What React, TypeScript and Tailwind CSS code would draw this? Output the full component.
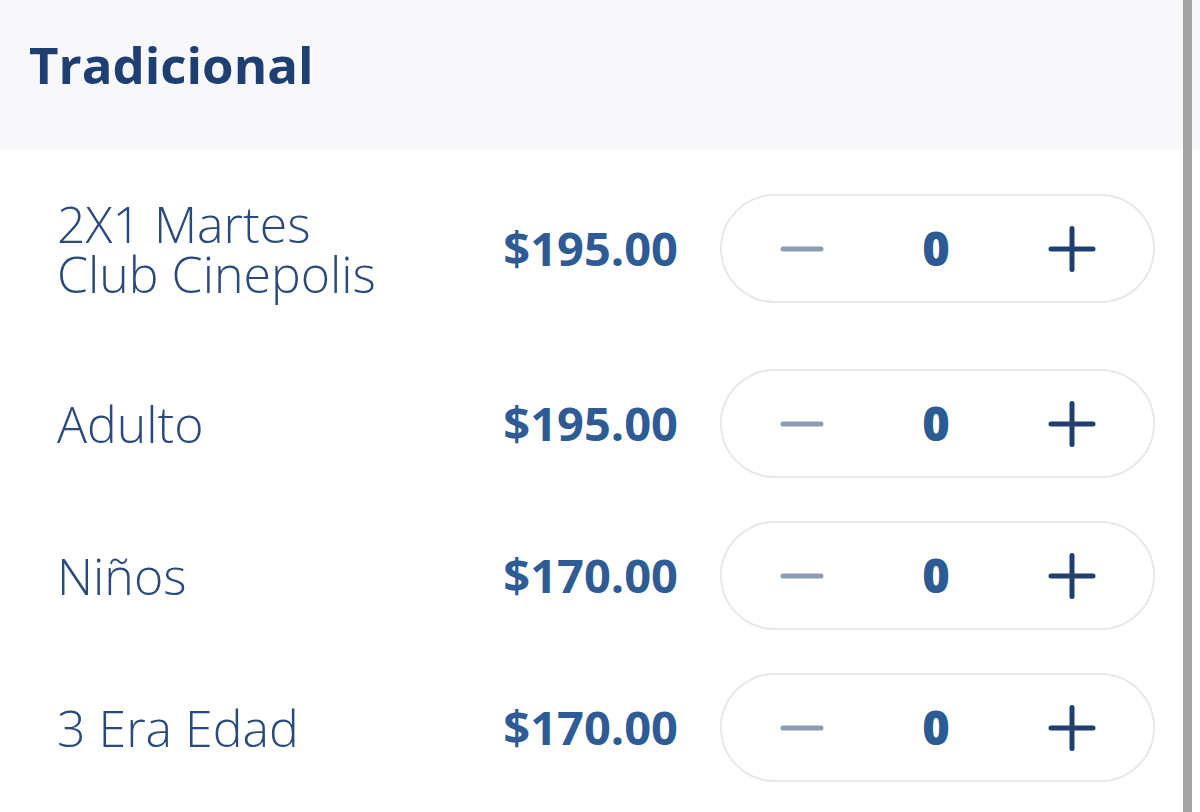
import React from 'react';

// Lista de boletos
const tickets = [
  { name: '2X1 Martes\nClub Cinepolis', price: '$195.00' },
  { name: 'Adulto', price: '$195.00' },
  { name: 'Niños', price: '$170.00' },
  { name: '3 Era Edad', price: '$170.00' },
];

const MinusIcon = () => (
  <svg width="44" height="10" viewBox="0 0 44 10" fill="none">
    <path d="M3 5h38" stroke="#8e9cb6" strokeWidth="5" strokeLinecap="round" />
  </svg>
);

const PlusIcon = () => (
  <svg width="48" height="46" viewBox="0 0 48 46" fill="none">
    <path d="M3 23h42M24 2.5v41" stroke="#1f3f6e" strokeWidth="5" strokeLinecap="round" />
  </svg>
);

const Stepper = ({ value }: { value: number }) => (
  <div className="flex h-[109px] w-[435px] shrink-0 items-center justify-between rounded-full border-2 border-[#e7e8ec] bg-white pl-[58px] pr-[57px]">
    <button className="flex items-center">
      <MinusIcon />
    </button>
    <span className="text-[47px] font-extrabold leading-none text-[#2c5a92]">{value}</span>
    <button className="flex items-center">
      <PlusIcon />
    </button>
  </div>
);

const TicketRow = ({ ticket, first }: { ticket: typeof tickets[0]; first: boolean }) => (
  <div className={`flex items-center pl-[57px] pr-[45px] ${first ? 'mb-[23px]' : ''}`}>
    <div className="w-[350px] whitespace-pre-line text-[50px] font-light leading-[50px] text-[#2b4a7b]">
      {ticket.name}
    </div>
    <div className="flex-1 pr-[42px] text-right text-[47px] font-bold leading-none text-[#2e5b94]">
      {ticket.price}
    </div>
    <Stepper value={0} />
  </div>
);

export default function App() {
  return (
    <div className="relative h-[812px] w-[1200px] overflow-hidden bg-white" style={{ fontFamily: '"Open Sans", sans-serif' }}>
      <div className="h-[150px] bg-[#f8f8fa] pl-[29px] pt-[39px]">
        <h2 className="text-[51px] font-bold leading-none text-[#1f3f73]">Tradicional</h2>
      </div>
      <div className="flex flex-col gap-[43px] pt-[44px]">
        {tickets.map((t, i) => (
          <TicketRow key={t.name} ticket={t} first={i === 0} />
        ))}
      </div>
      {/* barra de scroll */}
      <div className="absolute bottom-0 right-[8px] top-0 w-[9px] bg-[#a3a3a3]" />
    </div>
  );
}
